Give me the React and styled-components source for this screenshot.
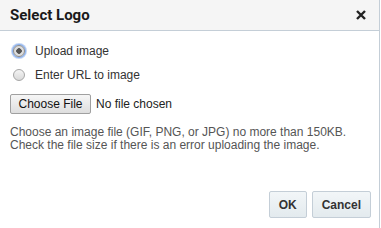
import React from "react";
import styled, { createGlobalStyle } from "styled-components";

const Global = createGlobalStyle`
  html, body { margin: 0; padding: 0; background: #fff; }
  body { font-family: "Liberation Sans", Arial, sans-serif; }
`;

const Dialog = styled.div`
  width: 379px;
  height: 228px;
  border-right: 1px solid #c4ced7;
  display: flex;
  flex-direction: column;
  box-sizing: content-box;
  background: #fff;
`;

const Header = styled.div`
  height: 30px;
  background: #f5f5f5;
  border-bottom: 1px solid #c4ced7;
  display: flex;
  align-items: center;
  justify-content: space-between;
  padding: 0 12px 0 10px;
`;

const Title = styled.h1`
  margin: 0;
  font-family: Roboto, "Liberation Sans", sans-serif;
  font-size: 15px;
  font-weight: 700;
  color: #1a1a1a;
`;

const Close = styled.button`
  border: 0;
  background: none;
  padding: 0;
  width: 12px;
  height: 12px;
  display: flex;
  cursor: pointer;
`;

const Body = styled.div`
  flex: 1;
  padding: 8px 10px 0 10px;
  display: flex;
  flex-direction: column;
`;

const RadioRow = styled.label`
  display: flex;
  align-items: center;
  height: 24px;
  font-size: 12px;
  color: #333;
  gap: 10px;
  padding-left: 3px;
`;

const Radio = styled.span`
  width: 10px;
  height: 10px;
  border-radius: 50%;
  border: 1px solid ${p => (p.$checked ? "#8a8a8a" : "#a6a6a6")};
  background: ${p => (p.$checked ? "radial-gradient(circle, #555 0 2.5px, #ddd 3px)" : "linear-gradient(#f4f4f4, #d9d9d9)")};
  box-shadow: ${p => (p.$checked ? "0 0 0 1px #8ab0ee, 0 0 0 2px #c3d6f5" : "none")};
  flex: none;
`;

const FileRow = styled.div`
  display: flex;
  align-items: center;
  gap: 5px;
  margin-top: 7px;
  font-size: 12px;
  color: #222;
`;

const FileButton = styled.span`
  display: inline-flex;
  align-items: center;
  justify-content: center;
  height: 18px;
  width: 79px;
  border: 1px solid #a0a0a0;
  border-radius: 2px;
  background: linear-gradient(#f6f6f6, #dedede);
  color: #111;
  font-size: 12px;
`;

const Help = styled.p`
  margin: 12px 0 0;
  font-size: 12px;
  line-height: 13px;
  color: #555;
`;

const Footer = styled.div`
  display: flex;
  justify-content: flex-end;
  gap: 5px;
  padding: 0 8px 10px 0;
`;

const Button = styled.button`
  height: 27px;
  margin: 0;
  padding: 0 9px;
  border: 1px solid #c4ced7;
  border-radius: 2px;
  background: linear-gradient(#f2f6f8, #e3eaee);
  font-family: "Liberation Sans", Arial, sans-serif;
  font-size: 12px;
  font-weight: 700;
  color: #333;
  cursor: pointer;
`;

export default function App() {
  return (
    <>
      <Global />
      <Dialog>
        <Header>
          <Title>Select Logo</Title>
          <Close aria-label="Close">
            <svg width="12" height="12" viewBox="0 0 12 12">
              <path d="M2 2 L10 10 M10 2 L2 10" stroke="#222" strokeWidth="2.4" strokeLinecap="butt" />
            </svg>
          </Close>
        </Header>
        <Body>
          <RadioRow>
            <Radio $checked />
            Upload image
          </RadioRow>
          <RadioRow>
            <Radio />
            Enter URL to image
          </RadioRow>
          <FileRow>
            <FileButton>Choose File</FileButton>
            No file chosen
          </FileRow>
          <Help>
            Choose an image file (GIF, PNG, or JPG) no more than 150KB.
            <br />
            Check the file size if there is an error uploading the image.
          </Help>
        </Body>
        <Footer>
          <Button>OK</Button>
          <Button>Cancel</Button>
        </Footer>
      </Dialog>
    </>
  );
}
